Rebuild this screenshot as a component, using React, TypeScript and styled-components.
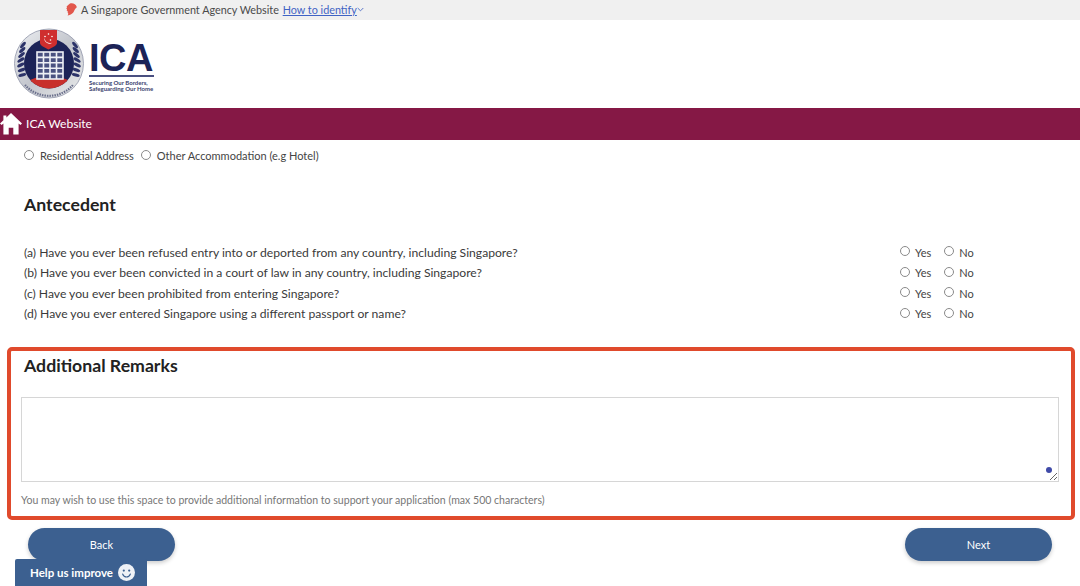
import React from 'react'
import styled, { createGlobalStyle } from 'styled-components'

const GlobalStyle = createGlobalStyle`
  html, body {
    margin: 0;
    padding: 0;
    background: #fff;
    overflow: hidden;
  }
  body {
    font-family: Lato, "Open Sans", sans-serif;
    color: #333;
  }
  * {
    box-sizing: border-box;
  }
`

const Page = styled.div`
  width: 1080px;
  height: 586px;
  overflow: hidden;
  position: relative;
`

const Masthead = styled.div`
  height: 20px;
  background: #f0f0f0;
  padding: 0 0 2px 66px;
  display: flex;
  align-items: center;
  gap: 4px;
  font-size: 10.8px;
  color: #4a4a4a;
`

const IdentifyLink = styled.a`
  color: #3f63c4;
  text-decoration: underline;
  margin-left: 1px;
`

const Branding = styled.div`
  height: 88px;
  padding: 8px 0 0 14px;
  display: flex;
  align-items: flex-start;
  gap: 3px;
`

const Wordmark = styled.div`
  display: flex;
  flex-direction: column;
  color: #1c2357;
  padding-top: 13px;
`

const WordmarkTitle = styled.div`
  font-family: "Liberation Sans", sans-serif;
  font-size: 38px;
  line-height: 34px;
  font-weight: 700;
  letter-spacing: -0.5px;
  border-bottom: 2px solid #4a4f80;
  width: 65px;
`

const WordmarkTagline = styled.div`
  font-size: 6px;
  line-height: 6px;
  font-weight: 700;
  margin-top: 3px;
  white-space: nowrap;
  color: #3a3f6e;
`

const NavBar = styled.nav`
  height: 32px;
  background: #851845;
  display: flex;
  align-items: center;
  gap: 4px;
  color: #fff;
  font-size: 12.1px;
`

const NavLabel = styled.span`
  margin-top: -2px;
`

const Content = styled.main`
  padding: 0 5px 0 7px;
`

const RadioRow = styled.div`
  display: flex;
  gap: 7px;
  padding: 8px 0 0 17px;
  height: 53px;
`

const Option = styled.label`
  display: inline-flex;
  align-items: center;
  gap: 6px;
  font-size: 11px;
  line-height: 15px;
  height: 15px;
  color: #444;
`

const AnswerOption = styled(Option)`
  gap: 5px;
`

const RadioDot = styled.span`
  width: 10px;
  height: 10px;
  border-radius: 50%;
  border: 1px solid #8a8a8a;
  background: #fff;
  margin-top: -2px;
  flex: none;
`

const SectionHeading = styled.h2`
  margin: 0;
  font-size: 17.7px;
  line-height: 24px;
  font-weight: 700;
  color: #222;
`

const AntecedentBlock = styled.section`
  padding-left: 17px;
  height: 154px;
`

const QuestionList = styled.div`
  margin-top: 25px;
  display: flex;
  flex-direction: column;
`

const QuestionRow = styled.div`
  display: flex;
  align-items: center;
  justify-content: space-between;
  height: 20.5px;
  font-size: 12.15px;
  color: #3a3a3a;
  padding-right: 100px;
`

const Answers = styled.div`
  display: flex;
  gap: 13px;
  width: 75px;
`

const RemarksFrame = styled.section`
  height: 173px;
  border: 4px solid #e04a2c;
  border-radius: 5px;
  padding: 3px 12px 0 10px;
`

const RemarksHeading = styled(SectionHeading)`
  padding-left: 3px;
`

const RemarksBox = styled.div`
  position: relative;
  margin-top: 19px;
  height: 85px;
`

const RemarksInput = styled.textarea`
  display: block;
  width: 100%;
  height: 100%;
  border: 1px solid #d6d6d6;
  background: #fff;
  outline: none;
`

const AssistDot = styled.span`
  position: absolute;
  right: 7px;
  bottom: 9px;
  width: 6px;
  height: 6px;
  border-radius: 50%;
  background: #3f4aa8;
`

const Hint = styled.p`
  margin: 11px 0 0;
  font-size: 10.55px;
  line-height: 14px;
  color: #777;
`

const Actions = styled.div`
  display: flex;
  justify-content: space-between;
  padding: 8px 23px 0 21px;
`

const PillButton = styled.button`
  width: 147px;
  height: 33px;
  border: none;
  border-radius: 17px;
  background: #3c6090;
  color: #fff;
  font-family: inherit;
  font-size: 11px;
  font-weight: 400;
  box-shadow: 0 2px 4px rgba(0, 0, 0, 0.2);
`

const FeedbackTab = styled.div`
  position: absolute;
  left: 15px;
  bottom: 0;
  width: 132px;
  height: 27px;
  background: #3c6090;
  border-radius: 2px 2px 0 0;
  color: #fff;
  font-size: 11.5px;
  font-weight: 700;
  display: flex;
  align-items: center;
  gap: 5px;
  padding-left: 15px;
`

const LionHead = () => (
  <svg width="11" height="13" viewBox="0 0 11 13">
    <path d="M4 .5C7 -.3 10 1.2 10.6 3.6 11 5 9.8 5.3 9 6.2 8 7.3 8.3 8.8 6.8 10 5.2 11.3 3.2 12.2 1.5 12.6 2.6 11 2.4 9.8 1.4 9.2 2.2 8.8 1.6 7.7.5 7.5 1.4 7 1 6 .2 5.6 1.2 5 1 3.9.6 3.3 1.8 3 2.6 1.2 4 .5Z" fill="#e2574c" />
  </svg>
)

const Chevron = () => (
  <svg width="7" height="5" viewBox="0 0 7 5" style={{ marginLeft: -4 }}>
    <path d="M.7 1 3.5 3.8 6.3 1" fill="none" stroke="#5a76c8" strokeWidth="1" />
  </svg>
)

const laurelLeaves = [0, 1, 2, 3, 4, 5, 6]

// emblem: ring centre is at (35, 35.5) in svg units
const Emblem = () => (
  <svg width="72" height="76" viewBox="0 0 72 76">
    <defs>
      <linearGradient id="ring" x1="0" y1="0" x2="1" y2="1">
        <stop offset="0" stopColor="#eef0f3" />
        <stop offset="0.5" stopColor="#c3c6cd" />
        <stop offset="1" stopColor="#eceded" />
      </linearGradient>
      <clipPath id="inner">
        <circle cx="35" cy="35.5" r="25" />
      </clipPath>
    </defs>
    <circle cx="35" cy="35.5" r="34.5" fill="url(#ring)" stroke="#8f94a8" strokeWidth="0.8" />
    <circle cx="35" cy="35.5" r="25" fill="#1c2357" />
    <g clipPath="url(#inner)">
      <ellipse cx="35" cy="60" rx="25" ry="12" fill="#c8302c" />
    </g>
    {laurelLeaves.map(i => {
      const ly = 17 + i * 5
      const lx = 6.5 + Math.abs(i - 3.5) * 0.7
      return (
        <g key={i}>
          <ellipse cx={lx} cy={ly} rx="4" ry="1.6" fill="#2c3369" transform={`rotate(${-50 + i * 6} ${lx} ${ly})`} />
          <ellipse cx={70 - lx} cy={ly} rx="4" ry="1.6" fill="#2c3369" transform={`rotate(${50 - i * 6} ${70 - lx} ${ly})`} />
        </g>
      )
    })}
    <g stroke="#eef0f5" strokeWidth="1.6" fill="#4a5180">
      <rect x="23" y="24" width="26" height="27" />
      <path d="M29.5 24V51M36 24V51M42.5 24V51M23 29.4H49M23 34.8H49M23 40.2H49M23 45.6H49" fill="none" />
    </g>
    <path d="M26 2H43V15C43 18 37 20 34.5 21.5 32 20 26 18 26 15Z" fill="#cf2e2e" />
    <path d="M30.5 9.5A5 5 0 0 0 38.5 14.5 5.5 5.5 0 0 1 30.5 9.5Z" fill="#fff" />
    <circle cx="34.5" cy="6" r="0.8" fill="#fff" />
    <circle cx="38" cy="8.5" r="0.8" fill="#fff" />
    <circle cx="31" cy="8.5" r="0.8" fill="#fff" />
    <circle cx="36.5" cy="12" r="0.8" fill="#fff" />
    <path d="M11 57A32 32 0 0 0 59 57" fill="none" stroke="#6a6f8c" strokeWidth="2.2" strokeDasharray="1.5 1" />
  </svg>
)

const HomeIcon = () => (
  <svg width="22" height="22" viewBox="0 0 22 22" style={{ flex: 'none' }}>
    <path d="M11 0 22 10.4 20.4 12 18.6 10.4V21.5H13.3V14.8H8.7V21.5H3.4V10.4L1.6 12 0 10.4 3.4 7.2V2.4H6.4V4.5Z" fill="#fff" />
  </svg>
)

const Smiley = () => (
  <svg width="17" height="17" viewBox="0 0 17 17">
    <circle cx="8.5" cy="8.5" r="8.5" fill="#eef1f6" />
    <circle cx="5.8" cy="6.6" r="1.1" fill="#3c6090" />
    <circle cx="11.2" cy="6.6" r="1.1" fill="#3c6090" />
    <path d="M4.6 10c.8 2 2.2 3 3.9 3s3.1-1 3.9-3" fill="none" stroke="#3c6090" strokeWidth="1.1" strokeLinecap="round" />
  </svg>
)

const questions = [
  '(a) Have you ever been refused entry into or deported from any country, including Singapore?',
  '(b) Have you ever been convicted in a court of law in any country, including Singapore?',
  '(c) Have you ever been prohibited from entering Singapore?',
  '(d) Have you ever entered Singapore using a different passport or name?',
]

const Radio: React.FC<{ label: string }> = ({ label }) => (
  <Option>
    <RadioDot />
    {label}
  </Option>
)

const Answer: React.FC<{ label: string }> = ({ label }) => (
  <AnswerOption>
    <RadioDot />
    {label}
  </AnswerOption>
)

export default function App() {
  return (
    <Page>
      <GlobalStyle />
      <Masthead>
        <LionHead />
        <span>
          A Singapore Government Agency Website <IdentifyLink>How to identify</IdentifyLink>
        </span>
        <Chevron />
      </Masthead>
      <Branding>
        <Emblem />
        <Wordmark>
          <WordmarkTitle>ICA</WordmarkTitle>
          <WordmarkTagline>
            Securing Our Borders,
            <br />
            Safeguarding Our Home
          </WordmarkTagline>
        </Wordmark>
      </Branding>
      <NavBar>
        <HomeIcon />
        <NavLabel>ICA Website</NavLabel>
      </NavBar>
      <Content>
        <RadioRow>
          <Radio label="Residential Address" />
          <Radio label="Other Accommodation (e.g Hotel)" />
        </RadioRow>
        <AntecedentBlock>
          <SectionHeading>Antecedent</SectionHeading>
          <QuestionList>
            {questions.map(q => (
              <QuestionRow key={q}>
                <span>{q}</span>
                <Answers>
                  <Answer label="Yes" />
                  <Answer label="No" />
                </Answers>
              </QuestionRow>
            ))}
          </QuestionList>
        </AntecedentBlock>
        <RemarksFrame>
          <RemarksHeading>Additional Remarks</RemarksHeading>
          <RemarksBox>
            <RemarksInput />
            <AssistDot />
          </RemarksBox>
          <Hint>You may wish to use this space to provide additional information to support your application (max 500 characters)</Hint>
        </RemarksFrame>
        <Actions>
          <PillButton>Back</PillButton>
          <PillButton>Next</PillButton>
        </Actions>
      </Content>
      <FeedbackTab>
        Help us improve
        <Smiley />
      </FeedbackTab>
    </Page>
  )
}
